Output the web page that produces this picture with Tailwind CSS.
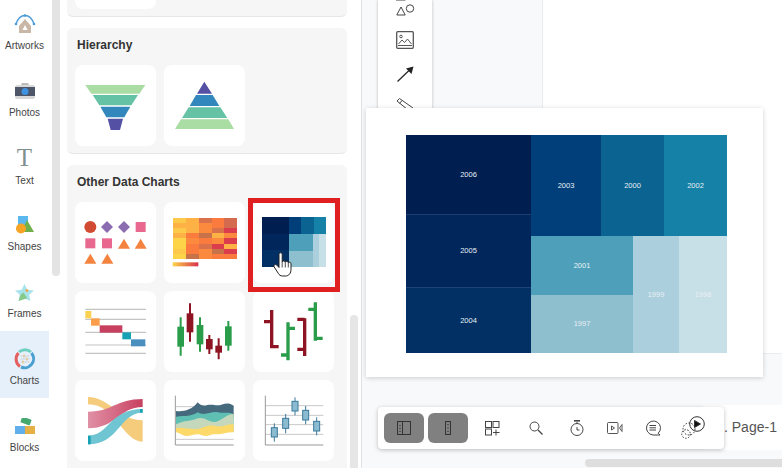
<!DOCTYPE html>
<html lang="en">
<head>
  <meta charset="UTF-8" />
  <title>Charts</title>
  <script src="https://cdn.jsdelivr.net/npm/@tailwindcss/browser@4"></script>
</head>
<body class="bg-white text-[#333] font-['Liberation_Sans',sans-serif]">
<div class="relative flex w-[782px] h-[468px] overflow-hidden">

  <!-- left nav -->
  <nav class="w-[49px] shrink-0 -mt-[4px] flex flex-col text-[10px] leading-[12px] text-[#444] text-center">
    <div class="h-[67px] shrink-0 pt-[16px]">
      <div class="h-[24px] flex items-center justify-center">
        <svg width="22" height="20" viewBox="0 0 22 20" fill="none"><path d="M2 10C4 4 8 1.500 11 1.500S18 4 20 10" stroke="#4a9ad8" stroke-width="1.400"/><circle cx="2" cy="10" r="1.300" fill="#4a9ad8"/><circle cx="20" cy="10" r="1.300" fill="#4a9ad8"/><circle cx="11" cy="1.500" r="1.300" fill="#4a9ad8"/><path d="M11 5l6 7v7H5v-7z" fill="#c9b8a8"/><path d="M8.500 16l2.500-5 2.500 5z" fill="#fff"/></svg>
      </div>
      <div class="mt-[4px]">Artworks</div>
    </div>
    <div class="h-[67px] shrink-0 pt-[16px]">
      <div class="h-[24px] flex items-center justify-center">
        <svg width="20" height="16" viewBox="0 0 20 16"><path d="M7 0h6l1 2H6z" fill="#bbb"/><rect y="2" width="20" height="14" rx="2" fill="#d8d8d8"/><rect y="4" width="20" height="9" fill="#4d5568"/><circle cx="10" cy="8.500" r="3.500" fill="#3f92e0"/></svg>
      </div>
      <div class="mt-[4px]">Photos</div>
    </div>
    <div class="h-[67px] shrink-0 pt-[16px]">
      <div class="h-[24px] flex items-center justify-center text-[25px] leading-[24px] text-[#7f9090] font-['Liberation_Serif',serif]">T</div>
      <div class="mt-[5px]">Text</div>
    </div>
    <div class="h-[67px] shrink-0 pt-[16px]">
      <div class="h-[24px] flex items-center justify-center">
        <svg width="20" height="18" viewBox="0 0 20 18"><rect x="3" width="10" height="10" fill="#5ab8ef"/><path d="M12 4l7 12H6z" fill="#6fb04a"/><circle cx="6" cy="12.500" r="5" fill="#f5a425"/></svg>
      </div>
      <div class="mt-[4px]">Shapes</div>
    </div>
    <div class="h-[67px] shrink-0 pt-[16px]">
      <div class="h-[24px] flex items-center justify-center">
        <svg width="19" height="17" viewBox="0 0 20 18"><path d="M10 0l3 6 7 .8-5 4.700 1.300 6.500L10 15l-6.300 3L5 11.500 0 6.800 7 6z" fill="#a9e3ec"/><path d="M3.700 18L6 11l3-2 4 6z" fill="#86c98a"/><circle cx="12.500" cy="7" r="1.500" fill="#f5a040"/></svg>
      </div>
      <div class="mt-[4px]">Frames</div>
    </div>
    <div class="h-[67px] shrink-0 pt-[16px] bg-[#e6f0fb]">
      <div class="h-[24px] flex items-center justify-center">
        <svg width="22" height="22" viewBox="0 0 22 22" fill="none"><path d="M6 18.500A9 9 0 0 1 4.500 5" stroke="#e4605e" stroke-width="3"/><path d="M5 4A9 9 0 0 1 17 4" stroke="#6fd0c0" stroke-width="3"/><path d="M17.500 5A9 9 0 0 1 7 19" stroke="#4a9fd0" stroke-width="3"/><path d="M6.500 8h9M6.500 11h9M6.500 14h9" stroke="#c4ccd4" stroke-width=".8"/><path d="M10 6.500v3M13 9.500v3M9 12.500v3" stroke="#ecb85a"/></svg>
      </div>
      <div class="mt-[4px]">Charts</div>
    </div>
    <div class="h-[67px] shrink-0 pt-[16px]">
      <div class="h-[24px] flex items-center justify-center">
        <svg width="20" height="16" viewBox="0 0 20 16"><rect x="6" y="0" width="10" height="6" rx="1" fill="#45a86e" transform="rotate(20 11 3)"/><rect y="8" width="10" height="8" fill="#60aeea"/><rect x="10" y="8" width="10" height="8" fill="#e5b045"/></svg>
      </div>
      <div class="mt-[4px]">Blocks</div>
    </div>
  </nav>

  <!-- nav scrollbar -->
  <div class="w-[18px] shrink-0 pl-[3px]">
    <div class="w-[8px] h-[276px] bg-[#e3e3e3] rounded-b-[4px]"></div>
  </div>

  <!-- chart panel -->
  <div class="w-[280px] shrink-0 flex flex-col gap-[11px] -mt-[40px]">
    <section class="h-[57px] shrink-0 bg-[#f6f6f6] rounded-[6px] border-b border-[#e6e6e6] px-[8px]">
      <div class="w-[81px] h-[49px] bg-white rounded-[8px]"></div>
    </section>
    <section class="h-[126px] shrink-0 bg-[#f6f6f6] rounded-[6px] border-b border-[#e6e6e6] px-[8px]">
      <h3 class="text-[12px] font-bold leading-[14px] pt-[10px] pl-[2px] mb-[13px] text-[#333]">Hierarchy</h3>
      <div class="flex gap-[8px]">
        <div class="w-[81px] h-[81px] bg-white rounded-[8px]">
          <svg width="81" height="81" viewBox="27 195 243 243">
            <path d="M58 255H238L220 281H76z" fill="#a9dda3"/><path d="M80 285H216L196 316H100z" fill="#66c2a5"/><path d="M103 320H193L175 352H121z" fill="#3288bd"/><path d="M125 356H171L162 390H134z" fill="#5450a4"/>
          </svg>
        </div>
        <div class="w-[81px] h-[81px] bg-white rounded-[8px]">
          <svg width="81" height="81" viewBox="294 195 243 243">
            <path d="M415 245L438 281H393z" fill="#5450a4"/><path d="M390 285H440L460 318H371z" fill="#3288bd"/><path d="M368 322H463L484 354H348z" fill="#66c2a5"/><path d="M345 358H487L504 387H327z" fill="#a9dda3"/>
          </svg>
        </div>
      </div>
    </section>
    <section class="h-[310px] shrink-0 bg-[#f6f6f6] rounded-[6px] px-[8px]">
      <h3 class="text-[12px] font-bold leading-[14px] pt-[10px] pl-[2px] mb-[13px] text-[#333]">Other Data Charts</h3>
      <div class="grid grid-cols-[81px_81px_81px] auto-rows-[81px] gap-[8px]">
        <div class="bg-white rounded-[8px]">
          <svg width="81" height="81" viewBox="27 127 243 243">
            <circle cx="73" cy="202" r="18" fill="#d14a32"/><path d="M123 184l18 18-18 18-18-18z" fill="#8b6cb0"/><path d="M174 184l18 18-18 18-18-18z" fill="#8b6cb0"/><rect x="209" y="187" width="30" height="30" fill="#e8688f"/>
            <rect x="58" y="236" width="30" height="30" fill="#e8688f"/><rect x="108" y="236" width="30" height="30" fill="#e8688f"/><path d="M174 237l18 30h-36z" fill="#f58340"/><path d="M224 237l18 30h-36z" fill="#f58340"/>
            <path d="M73 282l18 30H55z" fill="#f58340"/><path d="M124 282l18 30h-36z" fill="#f58340"/>
          </svg>
        </div>
        <div class="bg-white rounded-[8px]">
          <svg width="81" height="81" viewBox="294 127 243 243">
            <defs><linearGradient id="heatbar"><stop offset="0" stop-color="#fdd447"/><stop offset="1" stop-color="#d9304c"/></linearGradient></defs>
            <g transform="translate(320 175) scale(3 3.070)" shape-rendering="crispEdges">
              <rect width="13" height="5" fill="#fdc94a"/><rect x="13" width="13" height="5" fill="#feb144"/><rect x="26" width="13" height="5" fill="#d9724a"/><rect x="39" width="12" height="5" fill="#fb7a3d"/><rect x="51" width="13" height="5" fill="#d56b4e"/>
              <rect y="5" width="13" height="5" fill="#feb144"/><rect x="13" y="5" width="13" height="5" fill="#feb144"/><rect x="26" y="5" width="13" height="5" fill="#fb8a3f"/><rect x="39" y="5" width="12" height="5" fill="#fb7a3d"/><rect x="51" y="5" width="13" height="5" fill="#d56b4e"/>
              <rect y="10" width="13" height="5" fill="#fdc94a"/><rect x="13" y="10" width="13" height="5" fill="#feb144"/><rect x="26" y="10" width="13" height="5" fill="#fb8a3f"/><rect x="39" y="10" width="12" height="5" fill="#d9724a"/><rect x="51" y="10" width="13" height="5" fill="#dc3d4c"/>
              <rect y="15" width="13" height="5" fill="#feb144"/><rect x="13" y="15" width="13" height="5" fill="#fb7a3d"/><rect x="26" y="15" width="13" height="5" fill="#c8724a"/><rect x="39" y="15" width="12" height="5" fill="#feb144"/><rect x="51" y="15" width="13" height="5" fill="#fb8a3f"/>
              <rect y="20" width="13" height="5" fill="#fdd447"/><rect x="13" y="20" width="13" height="5" fill="#fb8a3f"/><rect x="26" y="20" width="13" height="5" fill="#fb7a3d"/><rect x="39" y="20" width="12" height="5" fill="#fb8a3f"/><rect x="51" y="20" width="13" height="5" fill="#dc3d4c"/>
              <rect y="25" width="13" height="5" fill="#fdd447"/><rect x="13" y="25" width="13" height="5" fill="#fb7a3d"/><rect x="26" y="25" width="13" height="5" fill="#d9724a"/><rect x="39" y="25" width="12" height="5" fill="#dc3d4c"/><rect x="51" y="25" width="13" height="5" fill="#feb144"/>
              <rect y="30" width="13" height="5" fill="#fdc94a"/><rect x="13" y="30" width="13" height="5" fill="#fb7a3d"/><rect x="26" y="30" width="13" height="5" fill="#fb8a3f"/><rect x="39" y="30" width="12" height="5" fill="#c8724a"/><rect x="51" y="30" width="13" height="5" fill="#dc3d4c"/>
              <rect y="35" width="13" height="5" fill="#fdd447"/><rect x="13" y="35" width="13" height="5" fill="#c8724a"/><rect x="26" y="35" width="13" height="5" fill="#fb8a3f"/><rect x="39" y="35" width="12" height="5" fill="#fb7a3d"/><rect x="51" y="35" width="13" height="5" fill="#fb7a3d"/>
            </g>
            <rect x="320" y="308" width="77" height="12" fill="url(#heatbar)"/>
          </svg>
        </div>
        <div class="relative bg-white rounded-[8px]">
          <svg width="81" height="81" viewBox="561 127 243 243">
            <g transform="translate(587 172) scale(3 3.020)" shape-rendering="crispEdges">
              <rect width="27" height="17" fill="#001e50"/><rect x="27" width="12" height="17" fill="#003f7a"/><rect x="39" width="13" height="17" fill="#0b6391"/><rect x="52" width="12" height="17" fill="#1581a6"/>
              <rect y="17" width="27" height="16" fill="#01265c"/><rect y="33" width="27" height="17" fill="#023064"/>
              <rect x="27" y="17" width="24" height="17" fill="#4ea0ba"/><rect x="27" y="34" width="24" height="16" fill="#8dbfcf"/><rect x="51" y="17" width="6" height="33" fill="#abcfdd"/><rect x="57" y="17" width="7" height="33" fill="#c7dfe6"/>
            </g>
          </svg>
          <svg class="absolute left-[20px] top-[50px]" width="19" height="25" viewBox="0 0 19 25"><path d="M6 2.500c0-2.200 3.200-2.200 3.200 0V10c.3-1.500 3-1.500 3.100.3.400-1.500 2.900-1.300 3 .5.500-1 2.700-.8 2.700 1v5.700c0 3.500-2 6.500-5.500 6.500H9.500c-2 0-3.300-1-4.300-2.800L1.200 15c-1-2 1.300-3.300 2.600-1.900L6 15.500z" fill="#fff" stroke="#222" stroke-width="1"/><path d="M9.200 10v5.500M12.300 10.300v5.200M15.300 10.800v4.700" stroke="#222" stroke-width=".8"/></svg>
          <div class="absolute -left-[5px] -top-[4px] w-[92px] h-[94px] border-[5px] border-[#e02020]"></div>
        </div>
        <div class="bg-white rounded-[8px]">
          <svg width="81" height="81" viewBox="27 18 243 243">
            <path d="M58 73H240M58 103H240M58 142H240M58 180H240M58 205H240" stroke="#c4c4c4" stroke-width="3.500"/>
            <rect x="58" y="78" width="18" height="22" fill="#fad151"/><rect x="75" y="100" width="26" height="22" fill="#fb9d4a"/><rect x="101" y="121" width="68" height="22" fill="#c8405f"/><rect x="169" y="142" width="26" height="21" fill="#16a2b4"/><rect x="195" y="163" width="43" height="21" fill="#4a90bf"/>
          </svg>
        </div>
        <div class="bg-white rounded-[8px]">
          <svg width="81" height="81" viewBox="294 18 243 243">
            <g stroke-width="6">
              <path d="M344 97V212M402 97V200M487 108V197" stroke="#2a9d4a"/>
              <path d="M372 55V170M430 150V207M458 160V223" stroke="#8f1423"/>
            </g>
            <rect x="334" y="125" width="20" height="60" fill="#2a9d4a"/><rect x="362" y="85" width="20" height="57" fill="#8f1423"/><rect x="392" y="120" width="20" height="58" fill="#2a9d4a"/><rect x="420" y="162" width="20" height="31" fill="#8f1423"/><rect x="448" y="182" width="20" height="21" fill="#8f1423"/><rect x="477" y="124" width="20" height="58" fill="#2a9d4a"/>
          </svg>
        </div>
        <div class="bg-white rounded-[8px]">
          <svg width="81" height="81" viewBox="561 18 243 243" fill="none" stroke-width="10">
            <path d="M617 75V190M594 110H617M617 185H638" stroke="#8f1423"/>
            <path d="M666 112V226M645 210H666M666 130H687" stroke="#2a9d4a"/>
            <path d="M716 100V213M694 103H716M694 193H716" stroke="#8f1423"/>
            <path d="M748 52V167M727 73H748M748 160H770" stroke="#2a9d4a"/>
          </svg>
        </div>
        <div class="bg-white rounded-[8px]">
          <svg width="81" height="81" viewBox="27 285 243 243">
            <defs><linearGradient id="sankeyred"><stop offset="0" stop-color="#e090a5"/><stop offset=".5" stop-color="#d56a85"/><stop offset="1" stop-color="#c8405f"/></linearGradient></defs>
            <path d="M66 336C130 336 160 406 230 406V470C170 470 150 358 66 358z" fill="#f2b950" opacity=".75"/>
            <path d="M66 380C140 380 150 342 230 342V366C160 366 150 430 66 430z" fill="url(#sankeyred)"/>
            <path d="M66 452C130 452 130 372 230 372V383C160 383 160 478 66 478z" fill="#6fc5d2"/>
            <rect x="66" y="452" width="8" height="26" fill="#16a2b4"/><rect x="222" y="372" width="8" height="11" fill="#16a2b4"/>
          </svg>
        </div>
        <div class="bg-white rounded-[8px]">
          <svg width="81" height="81" viewBox="294 285 243 243" fill="none">
            <path d="M328 365H503M328 463H503" stroke="#c8c8c8" stroke-width="3"/>
            <path d="M330 378C350 380 375 378 395 352C410 370 425 355 445 360C465 366 480 345 503 362V400H330z" fill="#456a7e"/>
            <path d="M330 395C360 392 375 395 395 382C415 395 435 378 455 382C475 386 490 380 503 388V440H330z" fill="#5fbfb3"/>
            <path d="M330 418C355 405 375 410 395 400C420 395 430 415 450 410C470 405 485 385 503 387V440H330z" fill="#c5d8bb"/>
            <path d="M330 430C350 425 370 435 395 432C415 428 425 420 445 422C465 430 485 415 503 418V442C485 440 465 450 445 447C430 450 420 458 400 448C385 445 365 458 350 450C342 447 335 442 330 442z" fill="#fcd969"/>
            <path d="M328 332V480H503" stroke="#999" stroke-width="3"/>
          </svg>
        </div>
        <div class="bg-white rounded-[8px]">
          <svg width="81" height="81" viewBox="561 285 243 243" fill="none">
            <path d="M598 362H772M598 391H772M598 419H772M598 448H772" stroke="#c8c8c8" stroke-width="3"/>
            <path d="M598 332V480H772" stroke="#999" stroke-width="3"/>
            <path d="M625 415V470M659 387V445M687 337V391M719 363V418M752 397V451" stroke="#3a7a9c" stroke-width="3"/>
            <g fill="#8bbbd0" stroke="#3a7a9c" stroke-width="3">
              <rect x="616" y="428" width="18" height="28"/><rect x="650" y="400" width="18" height="30"/><rect x="678" y="349" width="18" height="29"/><rect x="710" y="376" width="18" height="29"/><rect x="743" y="409" width="18" height="29"/>
            </g>
          </svg>
        </div>
      </div>
    </section>
  </div>

  <!-- panel scrollbar -->
  <div class="w-[14px] shrink-0 pl-[3px] pt-[315px]">
    <div class="w-[8px] h-[153px] bg-[#e6e6e6] rounded-t-[4px]"></div>
  </div>

  <!-- canvas -->
  <main class="relative flex-1 bg-[#f8f9fb] border-l border-[#e2e2e2]">
    <div class="absolute left-[180px] top-0 right-0 h-[354px] bg-white border-l border-b border-[#ececec]"></div>

    <div class="absolute left-[16px] top-0 w-[54px] h-[112px] bg-white shadow-[0_0_3px_rgba(0,0,0,.25)] flex flex-col items-center overflow-hidden">
      <svg class="-mt-[5px] shrink-0" width="20" height="21" viewBox="0 0 20 21" fill="none" stroke="#444"><rect x="1.500" y="-4" width="8.500" height="9"/><path d="M6 12l4.200 8H1.800z"/><circle cx="15" cy="13.500" r="3.700"/></svg>
      <svg class="mt-[15px] shrink-0" width="18" height="18" viewBox="0 0 18 18" fill="none" stroke="#555"><rect x=".7" y=".7" width="16.600" height="16.600" rx="1" stroke-width="1.300"/><circle cx="5" cy="5.500" r="1.300"/><path d="M2.500 13l3.500-4 2.500 2.500 3-3.500 4 5M2 14.500h14"/></svg>
      <svg class="mt-[17px] shrink-0" width="17" height="16" viewBox="0 0 17 16" fill="none"><path d="M.5 15.500L12 4.500" stroke="#222" stroke-width="1.200"/><path d="M16.500 .5l-2 7.500-5.500-5.500z" fill="#222"/></svg>
      <svg class="mt-[16px] shrink-0" width="18" height="16" viewBox="0 0 18 16" fill="none" stroke="#444"><path d="M1 3l2.500-2.500L17 10l-3 3.500z"/><path d="M3.500 5.500L6 2.500"/></svg>
    </div>

    <!-- slide -->
    <div class="absolute left-[4px] top-[108px] w-[397px] h-[269px] bg-white shadow-[0_1px_5px_rgba(0,0,0,.18)] pl-[40px] pt-[27px]">
      <div class="flex w-[321px] h-[218px] text-[7.500px] text-[#e8f0f4]">
        <div class="w-[125px] flex flex-col">
          <div class="h-[79px] bg-[#001e50] flex items-center justify-center">2006</div>
          <div class="h-[73px] bg-[#01265c] border-t border-[#1c3f70] flex items-center justify-center">2005</div>
          <div class="h-[66px] bg-[#023064] border-t border-[#1c4474] flex items-center justify-center">2004</div>
        </div>
        <div class="flex-1 flex flex-col">
          <div class="h-[101px] flex">
            <div class="w-[70px] bg-[#003f7a] flex items-center justify-center">2003</div>
            <div class="w-[63px] bg-[#0b6391] flex items-center justify-center">2000</div>
            <div class="w-[63px] bg-[#1581a6] flex items-center justify-center">2002</div>
          </div>
          <div class="flex-1 flex">
            <div class="w-[102px] flex flex-col">
              <div class="h-[59px] bg-[#4ea0ba] flex items-center justify-center">2001</div>
              <div class="flex-1 bg-[#8dbfcf] flex items-center justify-center">1997</div>
            </div>
            <div class="w-[46px] bg-[#abcfdd] flex items-center justify-center">1999</div>
            <div class="w-[48px] bg-[#c7dfe6] flex items-center justify-center">1998</div>
          </div>
        </div>
      </div>
    </div>

    <!-- page tab -->
    <div class="absolute left-[341px] top-[405px] right-0 h-[45px] bg-white flex items-center pl-[21px] text-[14px] text-[#555] whitespace-pre">. Page-1</div>

    <!-- bottom toolbar -->
    <div class="absolute left-[16px] top-[407px] w-[346px] h-[42px] bg-white rounded-[4px] shadow-[0_1px_4px_rgba(0,0,0,.25)] flex items-center pl-[6px]">
      <div class="w-[40px] h-[30px] bg-[#808080] rounded-[6px] flex items-center justify-center">
        <svg width="14" height="14" viewBox="0 0 14 14" fill="none" stroke="#333"><rect x=".5" y=".5" width="13" height="13"/><path d="M5.500 .5v13"/><path d="M3 4v1M3 7v1M3 10v1" stroke-width="1.200"/></svg>
      </div>
      <div class="w-[40px] h-[30px] ml-[4px] bg-[#808080] rounded-[6px] flex items-center justify-center">
        <svg width="6" height="14" viewBox="0 0 6 14" fill="none" stroke="#333"><rect x=".5" y=".5" width="5" height="13"/><path d="M3 3v1M3 6.500v1M3 10v1" stroke-width="1.200"/></svg>
      </div>
      <div class="w-[44px] ml-[2px] flex justify-center">
        <svg width="15" height="15" viewBox="0 0 15 15" fill="none" stroke="#444"><rect x=".5" y=".5" width="6" height="6"/><rect x="8" y=".5" width="6" height="6"/><rect x=".5" y="8" width="6" height="6"/><path d="M11 8.500v6M8 11.500h6.500"/></svg>
      </div>
      <div class="w-[44px] flex justify-center">
        <svg width="14" height="14" viewBox="0 0 14 14" fill="none" stroke="#444"><circle cx="5.500" cy="5.500" r="4.500"/><path d="M9 9l4.500 4.500" stroke-width="1.200"/></svg>
      </div>
      <div class="w-[38px] flex justify-center">
        <svg width="14" height="16" viewBox="0 0 14 16" fill="none" stroke="#444"><circle cx="7" cy="9.500" r="6"/><path d="M4 .8h6" stroke-width="1.600"/><path d="M7 2v1.500M7 7v3h2.500"/></svg>
      </div>
      <div class="w-[38px] flex justify-center">
        <svg width="16" height="12" viewBox="0 0 16 12" fill="none" stroke="#555"><rect x=".5" y=".5" width="10.500" height="11" rx="1"/><path d="M4.500 4l3 2-3 2z"/><path d="M15 2.500L12.500 6l2.500 3.500z"/></svg>
      </div>
      <div class="w-[38px] flex justify-center">
        <svg width="16" height="16" viewBox="0 0 16 16" fill="none" stroke="#444"><path d="M15 15l-1.800-1.800A7 7 0 1 0 8 15h7"/><path d="M4.500 5.500h6.500M4.500 7.800h6.500M4.500 10h6.500"/></svg>
      </div>
      <div class="w-[42px] flex justify-center">
        <svg width="24" height="24" viewBox="0 0 24 24" fill="none" stroke="#333"><circle cx="16" cy="8" r="7.300"/><path d="M13.500 4.500l6 3.500-6 3.500z" fill="#111"/><circle cx="8" cy="13" r="6" stroke-dasharray="1.500 1.500"/><circle cx="5" cy="18" r="4.300" stroke-dasharray="1.500 1.500"/></svg>
      </div>
    </div>

    <div class="absolute left-[223px] top-[459px] right-0 h-[8px] bg-[#dedede] rounded-l-[4px]"></div>
  </main>
</div>
</body>
</html>
